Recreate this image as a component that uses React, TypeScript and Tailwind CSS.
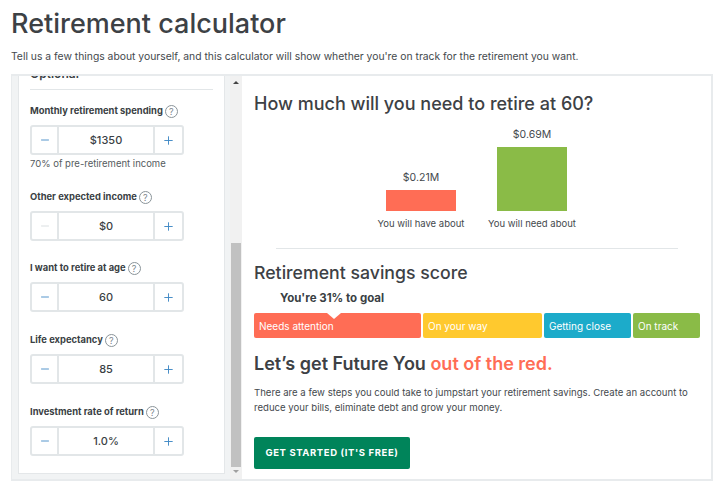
import React from 'react';
import { Minus, Plus } from 'lucide-react';

const font = "font-['Inter','Liberation_Sans',sans-serif]";

function Help() {
  return (
    <span className="flex h-[13px] w-[13px] shrink-0 items-center justify-center rounded-full border border-[#8a9499] text-[9px] font-normal leading-none text-[#7d878c]">
      ?
    </span>
  );
}

function Stepper({ value, disabled }: { value: string; disabled?: boolean }) {
  return (
    <div className="flex h-[30px] w-[154px] rounded-[3px] border-2 border-[#e2e6e8] bg-white">
      <div className="flex w-[27px] items-center justify-center border-r-2 border-[#e2e6e8]">
        <Minus size={12} strokeWidth={1.75} className={disabled ? 'text-[#d5dadd]' : 'text-[#3f88c5]'} />
      </div>
      <div className="flex flex-1 items-center justify-center text-[11px] font-medium text-[#3a3f44]">{value}</div>
      <div className="flex w-[29px] items-center justify-center border-l-2 border-[#e2e6e8]">
        <Plus size={13} strokeWidth={1.75} className="text-[#3f88c5]" />
      </div>
    </div>
  );
}

function Field({ label, value, disabled, note, className }: { label: string; value: string; disabled?: boolean; note?: string; className?: string }) {
  return (
    <div className={className}>
      <div className="flex h-[14px] items-center gap-[2px] text-[9.4px] font-bold leading-none text-[#3a3f44]">
        {label} <Help />
      </div>
      <div className="mt-[7px]">
        <Stepper value={value} disabled={disabled} />
      </div>
      {note && <div className="mt-[2px] text-[9.5px] leading-[14px] text-[#555b60]">{note}</div>}
    </div>
  );
}

function Segment({ label, color, className }: { label: string; color: string; className: string }) {
  return (
    <div className={`flex h-[25px] items-center rounded-[2px] pl-[5px] pt-[2px] text-[10px] text-white ${color} ${className}`}>
      {label}
    </div>
  );
}

export default function App() {
  return (
    <div className={`h-[486px] w-[720px] overflow-hidden bg-white px-[11px] ${font}`}>
      <h1 className="pt-[6px] text-[27px] font-medium leading-[36px] text-[#3d4145]">Retirement calculator</h1>
      <p className="mt-[6px] text-[10.35px] leading-[16px] text-[#44494d]">
        Tell us a few things about yourself, and this calculator will show whether you're on track for the retirement you want.
      </p>

      <div className="mt-[10px] flex h-[407px] w-[702px] border-2 border-[#e8ebed] border-l-[1px]">
        {/* left scroll area */}
        <div className="flex h-full w-[218px] shrink-0 bg-[#f1f3f4]">
          <div className="ml-[6px] mb-[5px] w-[207px] overflow-hidden border border-[#e4e7e9] border-t-0 bg-white px-[11px]">
            <div className="-mt-[9px] h-[22px] text-[12px] font-semibold leading-[14px] text-[#3a3f44]">Optional</div>
            <div className="h-px w-[183px] bg-[#e2e6e8]" />
            <Field className="mt-[14px]" label="Monthly retirement spending" value="$1350" note="70% of pre-retirement income" />
            <Field className="mt-[19px]" label="Other expected income" value="$0" disabled />
            <Field className="mt-[20px]" label="I want to retire at age" value="60" />
            <Field className="mt-[21px]" label="Life expectancy" value="85" />
            <Field className="mt-[21px]" label="Investment rate of return" value="1.0%" />
          </div>
        </div>

        {/* scrollbar */}
        <div className="flex h-full w-[12px] shrink-0 flex-col items-center bg-[#f1f1f1]">
          <div className="mt-[5px] h-0 w-0 border-x-[3px] border-b-[3px] border-x-transparent border-b-[#444]" />
          <div className="mt-[159px] h-[224px] w-[10px] bg-[#c1c1c1]" />
          <div className="mt-[3px] h-0 w-0 border-x-[3px] border-t-[3px] border-x-transparent border-t-[#a0a0a0]" />
        </div>

        {/* results */}
        <div className="flex-1 pl-[12px] pt-[16px]">
          <h2 className="text-[18px] font-medium leading-[24px] text-[#3d4145]">How much will you need to retire at 60?</h2>

          <div className="mt-[8px] flex h-[106px] items-end justify-center gap-[41px] pr-[12px]">
            <div className="flex w-[70px] flex-col items-center">
              <span className="mb-[5px] text-[10.5px] leading-[14px] text-[#44494d]">$0.21M</span>
              <div className="h-[21px] w-[70px] bg-[#ff6d55]" />
              <span className="mt-[6px] h-[13px] whitespace-nowrap text-[9.5px] leading-[14px] text-[#44494d]">You will have about</span>
            </div>
            <div className="flex w-[70px] flex-col items-center">
              <span className="mb-[5px] text-[10.5px] leading-[14px] text-[#44494d]">$0.69M</span>
              <div className="h-[64px] w-[70px] bg-[#8abb47]" />
              <span className="mt-[6px] h-[13px] whitespace-nowrap text-[9.5px] leading-[14px] text-[#44494d]">You will need about</span>
            </div>
          </div>

          <div className="ml-[22px] mt-[18px] h-px w-[402px] bg-[#e2e6e8]" />

          <h2 className="mt-[12px] text-[17.7px] font-medium leading-[24px] text-[#3d4145]">Retirement savings score</h2>
          <div className="ml-[26px] mt-[5px] text-[11.5px] font-bold leading-[16px] text-[#3a3f44]">You're 31% to goal</div>

          <div className="relative mt-[7px] flex gap-[2px]">
            <Segment label="Needs attention" color="bg-[#ff6d55]" className="w-[167px]" />
            <Segment label="On your way" color="bg-[#ffc92e]" className="w-[119px]" />
            <Segment label="Getting close" color="bg-[#1cabca]" className="w-[87px]" />
            <Segment label="On track" color="bg-[#8abb47]" className="w-[67px]" />
            <div className="absolute left-[73px] top-0 h-0 w-0 border-x-[7px] border-t-[6px] border-x-transparent border-t-white" />
          </div>

          <h2 className="mt-[14px] text-[18px] font-semibold leading-[24px] text-[#3d4145]">
            Let’s get Future You <span className="text-[#ff6d55]">out of the red.</span>
          </h2>
          <p className="mt-[9px] w-[446px] text-[9.6px] leading-[15px] text-[#44494d]">
            There are a few steps you could take to jumpstart your retirement savings. Create an account to reduce your bills, eliminate debt and grow your money.
          </p>

          <button className="mt-[22px] flex h-[32px] w-[156px] items-center justify-center rounded-[2px] bg-[#00845a] text-[9.5px] font-bold tracking-[0.6px] text-white">
            GET STARTED (IT'S FREE)
          </button>
        </div>
      </div>
    </div>
  );
}
